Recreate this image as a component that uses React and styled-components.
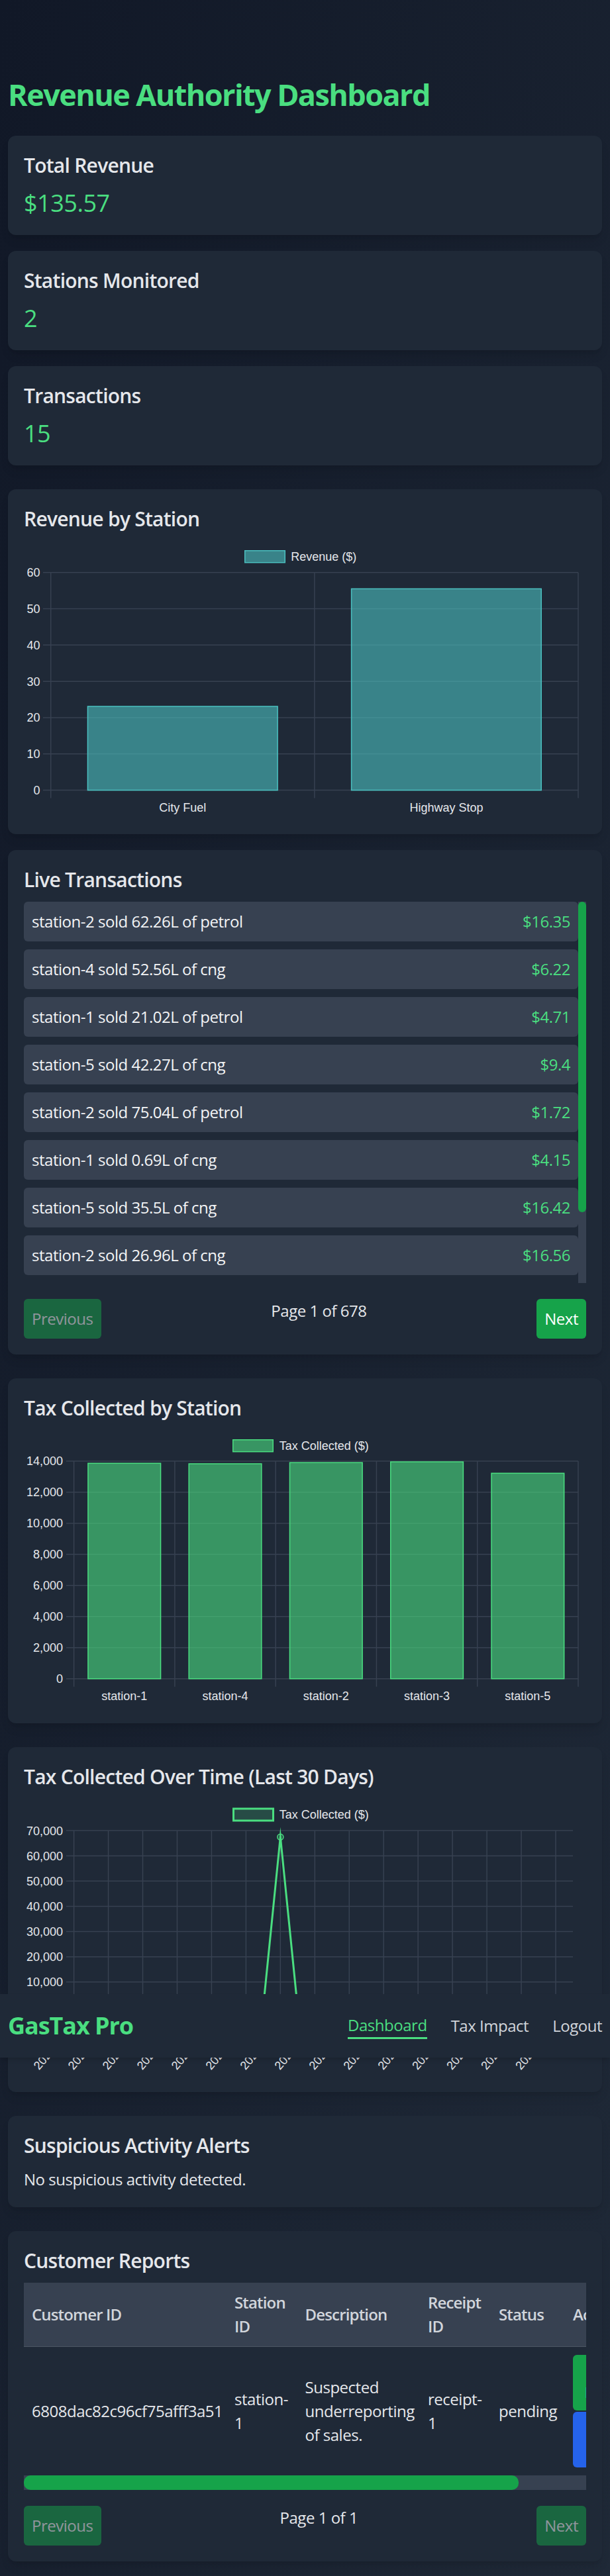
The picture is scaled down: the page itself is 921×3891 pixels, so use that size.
import React from "react";
import styled, { createGlobalStyle } from "styled-components";

const GlobalStyle = createGlobalStyle`
  html, body { margin: 0; padding: 0; }
  * { box-sizing: border-box; }
  body {
    background: linear-gradient(to bottom right, #111827, #1f2937);
    font-family: "Segoe UI", "Open Sans", "Noto Sans", sans-serif;
    color: #e5e7eb;
    letter-spacing: -0.03em;
  }
`;

const Page = styled.div`
  position: relative;
  padding: 116px 12px 25px;
`;

const Title = styled.h1`
  margin: 0 0 35px;
  font-size: 45px;
  line-height: 54px;
  font-weight: 700;
  color: #4ade80;
  letter-spacing: -0.035em;
`;

const StatGrid = styled.div`
  display: grid;
  gap: 24px;
  margin-bottom: 36px;
`;

const Card = styled.section`
  background: #1f2937;
  border-radius: 12px;
  padding: 24px;
  box-shadow: 0 10px 15px -3px rgba(0, 0, 0, 0.1), 0 4px 6px -4px rgba(0, 0, 0, 0.1);
  margin-bottom: ${(p) => p.$gap ?? 36}px;
`;

const StatCard = styled(Card)`
  margin-bottom: 0;
`;

const CardTitle = styled.h2`
  margin: 0 0 ${(p) => p.$mb ?? 12}px;
  font-size: 30px;
  line-height: 42px;
  font-weight: 600;
  color: #e5e7eb;
  letter-spacing: -0.025em;
`;

const StatValue = styled.p`
  margin: 0;
  font-size: 36px;
  line-height: 48px;
  color: #4ade80;
`;

const ChartSvg = styled.svg`
  display: block;
  width: 100%;
  height: 419px;
  font-family: "Liberation Sans", Arial, sans-serif;
  font-size: 18px;
  letter-spacing: 0;
  overflow: visible;
`;

/* list with its scrollbar drawn beside it */
const TxScroller = styled.div`
  display: flex;
  height: 576px;
`;

const TxList = styled.div`
  flex: 1;
  min-width: 0;
  display: flex;
  flex-direction: column;
  gap: 12px;
  overflow: hidden;
`;

const VTrack = styled.div`
  flex: none;
  width: 12px;
  background: #374151;
`;

const VThumb = styled.div`
  height: 469px;
  background: #16a34a;
  border-radius: 6px;
`;

const TxRow = styled.div`
  flex: none;
  display: flex;
  justify-content: space-between;
  align-items: center;
  background: #374151;
  border-radius: 6px;
  padding: 12px;
  font-size: 24px;
  line-height: 36px;
  color: #f3f4f6;
`;

const TxAmount = styled.span`
  color: #4ade80;
`;

const Pager = styled.div`
  display: flex;
  justify-content: space-between;
  align-items: flex-start;
  margin-top: 24px;
`;

const PagerButton = styled.button`
  font-family: inherit;
  letter-spacing: inherit;
  font-size: 24px;
  line-height: 36px;
  padding: 12px;
  border: none;
  border-radius: 6px;
  background: #16a34a;
  color: #ffffff;
  cursor: pointer;
  &:disabled {
    opacity: 0.5;
    cursor: default;
  }
`;

const PageInfo = styled.span`
  font-size: 24px;
  line-height: 36px;
  color: #e5e7eb;
`;

const Text = styled.p`
  margin: 0;
  font-size: 24px;
  line-height: 36px;
  color: #e5e7eb;
`;

const TableWrap = styled.div`
  overflow: hidden;
`;

const HTrack = styled.div`
  height: 22px;
  background: #374151;
`;

const HThumb = styled.div`
  width: 747px;
  height: 100%;
  background: #16a34a;
  border-radius: 10px;
`;

const Table = styled.table`
  table-layout: fixed;
  width: 965px;
  border-collapse: collapse;
`;

const Col = styled.col`
  width: ${(p) => p.$w}px;
`;

const Th = styled.th`
  background: #374151;
  padding: 12px;
  text-align: left;
  vertical-align: middle;
  font-size: 24px;
  line-height: 36px;
  font-weight: 600;
  color: #d1d5db;
  border-bottom: 1.5px solid #4b5563;
  letter-spacing: -0.035em;
`;

const Td = styled.td`
  padding: 12px;
  vertical-align: middle;
  font-size: 24px;
  line-height: 36px;
  color: #e5e7eb;
`;

const ActionStack = styled.div`
  display: flex;
  flex-direction: column;
  gap: 1.5px;
`;

const ActionButton = styled.button`
  font-family: inherit;
  letter-spacing: inherit;
  font-size: 21px;
  line-height: 30px;
  padding: 12px 18px;
  border: none;
  border-radius: 6px;
  color: #ffffff;
  text-align: center;
  background: ${(p) => (p.$tone === "blue" ? "#2563eb" : "#16a34a")};
`;

const Nav = styled.nav`
  position: absolute;
  top: 3012px;
  left: 0;
  right: 0;
  height: 96px;
  padding: 24px 12px;
  display: flex;
  justify-content: space-between;
  align-items: center;
  background: #1f2937;
  box-shadow: 0 4px 6px -1px rgba(0, 0, 0, 0.15);
  z-index: 10;
`;

const Brand = styled.div`
  font-size: 36px;
  line-height: 48px;
  font-weight: 700;
  color: #4ade80;
  letter-spacing: -0.03em;
`;

const NavLinks = styled.div`
  display: flex;
  align-items: center;
  gap: 36px;
`;

const NavLink = styled.a`
  font-size: 24px;
  line-height: 36px;
  text-decoration: none;
  color: ${(p) => (p.$active ? "#4ade80" : "#d1d5db")};
  border-bottom: ${(p) => (p.$active ? "3px solid #4ade80" : "none")};
`;

/* ---------- chart drawing ---------- */

const GRID = "#374151";
const TICK = "#e5e7eb";

function fmt(v) {
  return v.toLocaleString("en-US");
}

function Legend({ lg }) {
  return (
    <g>
      <rect x={lg.x} y={lg.y} width={lg.w} height={18} fill={lg.fill} stroke={lg.stroke} strokeWidth={lg.sw} />
      <text x={lg.textX} y={lg.y + 9 + 6.4} fill={TICK}>{lg.text}</text>
    </g>
  );
}

function BarChart({ c }) {
  const n = c.labels.length;
  const cw = (c.right - c.left) / n;
  const bw = cw * 0.72;
  const h = c.bottom - c.top;
  const ticks = [];
  for (let v = 0; v <= c.max; v += c.step) ticks.push(v);
  return (
    <ChartSvg viewBox="0 0 849 419">
      <g transform={`translate(-36 -${c.oy})`}>
        <Legend lg={c.legend} />
        {ticks.map((v) => {
          const y = c.bottom - (v / c.max) * h;
          return (
            <g key={v}>
              <line x1={c.tickStart} x2={c.right} y1={y} y2={y} stroke={GRID} strokeWidth={1.5} />
              <text x={c.labelRight} y={y + 6.4} textAnchor="end" fill={TICK}>{fmt(v)}</text>
            </g>
          );
        })}
        {Array.from({ length: n + 1 }, (_, k) => (
          <line key={k} x1={c.left + cw * k} x2={c.left + cw * k} y1={c.top} y2={c.bottom + 12} stroke={GRID} strokeWidth={1.5} />
        ))}
        {c.values.map((v, i) => {
          const x = c.left + cw * (i + 0.5) - bw / 2;
          const y = c.bottom - (v / c.max) * h;
          return (
            <rect key={i} x={x} y={y} width={bw} height={c.bottom - y} fill={c.fill} stroke={c.stroke} strokeWidth={1.5} />
          );
        })}
        {c.labels.map((l, i) => (
          <text key={l} x={c.left + cw * (i + 0.5)} y={c.bottom + 32.7} textAnchor="middle" fill={TICK}>{l}</text>
        ))}
      </g>
    </ChartSvg>
  );
}

function LineChart({ c }) {
  const n = c.values.length;
  const step = (c.right - c.left) / (n - 1);
  const h = c.bottom - c.top;
  const ticks = [];
  for (let v = 0; v <= c.max; v += c.step) ticks.push(v);
  const pts = c.values.map((v, i) => [c.left + step * i, c.bottom - (v / c.max) * h]);
  return (
    <ChartSvg viewBox="0 0 849 419">
      <g transform={`translate(-36 -${c.oy})`}>
        <Legend lg={c.legend} />
        {ticks.map((v) => {
          const y = c.bottom - (v / c.max) * h;
          return (
            <g key={v}>
              <line x1={c.tickStart} x2={c.right} y1={y} y2={y} stroke={GRID} strokeWidth={1.5} />
              <text x={c.labelRight} y={y + 6.4} textAnchor="end" fill={TICK}>{fmt(v)}</text>
            </g>
          );
        })}
        {c.labels.map((l, i) =>
          i % 2 === 0 ? (
            <line key={l} x1={pts[i][0]} x2={pts[i][0]} y1={c.top} y2={c.bottom + 12} stroke={GRID} strokeWidth={1.5} />
          ) : null
        )}
        <polyline
          points={pts.map((p) => p.join(",")).join(" ")}
          fill="none"
          stroke="#4ade80"
          strokeWidth={3}
          strokeLinejoin="miter"
          strokeMiterlimit={10}
        />
        {pts.map((p, i) => (
          <circle key={i} cx={p[0]} cy={p[1]} r={4.5} fill="rgba(74,222,128,0.2)" stroke="#4ade80" strokeWidth={1.5} />
        ))}
        {c.labels.map((l, i) =>
          i % 2 === 0 ? (
            <text
              key={l}
              transform={`translate(${pts[i][0] + 3} ${c.bottom + 22}) rotate(-50)`}
              textAnchor="end"
              dominantBaseline="middle"
              fill={TICK}
            >
              {l}
            </text>
          ) : null
        )}
      </g>
    </ChartSvg>
  );
}

/* ---------- data ---------- */

const stats = [
  ["Total Revenue", "$135.57"],
  ["Stations Monitored", "2"],
  ["Transactions", "15"],
];

const revenueChart = {
  oy: 817,
  legend: { x: 369.75, y: 831.75, w: 60.5, text: "Revenue ($)", textX: 439.3, fill: "rgba(75,192,192,0.6)", stroke: "rgb(75,192,192)", sw: 1.5 },
  left: 76.7,
  right: 873,
  top: 864.7,
  bottom: 1193.6,
  max: 60,
  step: 10,
  tickStart: 65,
  labelRight: 60.5,
  labels: ["City Fuel", "Highway Stop"],
  values: [23.1, 55.5],
  fill: "rgba(75,192,192,0.6)",
  stroke: "rgb(75,192,192)",
};

const taxChart = {
  oy: 2160,
  legend: { x: 351.75, y: 2174.75, w: 60.5, text: "Tax Collected ($)", textX: 421.7, fill: "rgba(74,222,128,0.6)", stroke: "#4ade80", sw: 1.5 },
  left: 111.6,
  right: 873,
  top: 2207,
  bottom: 2535.7,
  max: 14000,
  step: 2000,
  tickStart: 100,
  labelRight: 95.1,
  labels: ["station-1", "station-4", "station-2", "station-3", "station-5"],
  values: [13860, 13830, 13906, 13953, 13220],
  fill: "rgba(74,222,128,0.6)",
  stroke: "#4ade80",
};

const dayLabels = Array.from({ length: 30 }, (_, i) => {
  const d = new Date(Date.UTC(2025, 2, 25 + i));
  return d.toISOString().slice(0, 10);
});

const lineChart = {
  oy: 2715.5,
  legend: { x: 352.5, y: 2730.5, w: 60, text: "Tax Collected ($)", textX: 421.7, fill: "rgba(74,222,128,0.2)", stroke: "#4ade80", sw: 3 },
  left: 111.6,
  right: 865,
  top: 2763.6,
  bottom: 3030.5,
  max: 70000,
  step: 10000,
  tickStart: 100,
  labelRight: 95.1,
  labels: dayLabels,
  values: dayLabels.map((_, i) => (i === 12 ? 67480 : 0)),
};

const transactions = [
  ["station-2 sold 62.26L of petrol", "$16.35"],
  ["station-4 sold 52.56L of cng", "$6.22"],
  ["station-1 sold 21.02L of petrol", "$4.71"],
  ["station-5 sold 42.27L of cng", "$9.4"],
  ["station-2 sold 75.04L of petrol", "$1.72"],
  ["station-1 sold 0.69L of cng", "$4.15"],
  ["station-5 sold 35.5L of cng", "$16.42"],
  ["station-2 sold 26.96L of cng", "$16.56"],
];

const columns = [
  ["Customer ID", 306],
  ["Station ID", 106.5],
  ["Description", 185.5],
  ["Receipt ID", 107],
  ["Status", 112],
  ["Actions", 148],
];

export default function App() {
  return (
    <Page>
      <GlobalStyle />
      <Title>Revenue Authority Dashboard</Title>

      <StatGrid>
        {stats.map(([label, value]) => (
          <StatCard key={label}>
            <CardTitle>{label}</CardTitle>
            <StatValue>{value}</StatValue>
          </StatCard>
        ))}
      </StatGrid>

      <Card $gap={24}>
        <CardTitle>Revenue by Station</CardTitle>
        <BarChart c={revenueChart} />
      </Card>

      <Card>
        <CardTitle>Live Transactions</CardTitle>
        <TxScroller>
          <TxList>
            {transactions.map(([t, a], i) => (
              <TxRow key={i}>
                <span>{t}</span>
                <TxAmount>{a}</TxAmount>
              </TxRow>
            ))}
          </TxList>
          <VTrack>
            <VThumb />
          </VTrack>
        </TxScroller>
        <Pager>
          <PagerButton disabled>Previous</PagerButton>
          <PageInfo>Page 1 of 678</PageInfo>
          <PagerButton>Next</PagerButton>
        </Pager>
      </Card>

      <Card>
        <CardTitle>Tax Collected by Station</CardTitle>
        <BarChart c={taxChart} />
      </Card>

      <Card>
        <CardTitle>Tax Collected Over Time (Last 30 Days)</CardTitle>
        <LineChart c={lineChart} />
      </Card>

      <Card>
        <CardTitle>Suspicious Activity Alerts</CardTitle>
        <Text>No suspicious activity detected.</Text>
      </Card>

      <Card $gap={0}>
        <CardTitle>Customer Reports</CardTitle>
        <TableWrap>
          <Table>
            <colgroup>
              {columns.map(([name, w]) => (
                <Col key={name} $w={w} />
              ))}
            </colgroup>
            <thead>
              <tr>
                {columns.map(([name]) => (
                  <Th key={name}>{name}</Th>
                ))}
              </tr>
            </thead>
            <tbody>
              <tr>
                <Td>6808dac82c96cf75afff3a51</Td>
                <Td>station-1</Td>
                <Td>Suspected underreporting of sales.</Td>
                <Td>receipt-1</Td>
                <Td>pending</Td>
                <Td>
                  <ActionStack>
                    <ActionButton>Mark Reviewed</ActionButton>
                    <ActionButton $tone="blue">Flag Fraud</ActionButton>
                  </ActionStack>
                </Td>
              </tr>
            </tbody>
          </Table>
        </TableWrap>
        <HTrack>
          <HThumb />
        </HTrack>
        <Pager>
          <PagerButton disabled>Previous</PagerButton>
          <PageInfo>Page 1 of 1</PageInfo>
          <PagerButton disabled>Next</PagerButton>
        </Pager>
      </Card>

      <Nav>
        <Brand>GasTax Pro</Brand>
        <NavLinks>
          <NavLink href="#" $active>Dashboard</NavLink>
          <NavLink href="#">Tax Impact</NavLink>
          <NavLink href="#">Logout</NavLink>
        </NavLinks>
      </Nav>
    </Page>
  );
}
